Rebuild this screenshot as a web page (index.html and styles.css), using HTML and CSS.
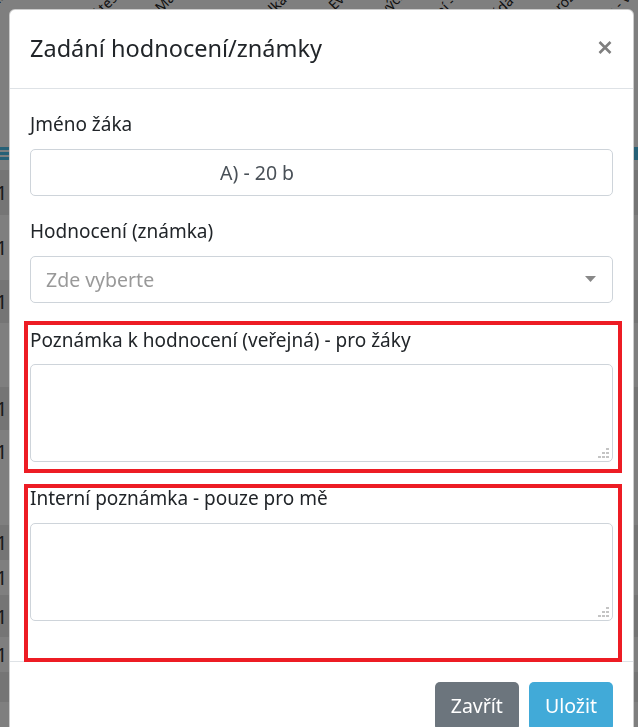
FILE: index.html
```html
<!DOCTYPE html>
<html lang="cs">
<head>
    <meta charset="UTF-8">
    <meta name="viewport" content="width=device-width, initial-scale=1.0">
    <title>Zadání hodnocení</title>
    <link rel="stylesheet" href="styles.css">
</head>
<body>
    <!-- Page behind the dialog -->
    <div class="page">
        <div class="heads">
            <div class="head"><span>Vyjmenovaná slova po N</span></div>
            <div class="head short"><span>Diktát</span></div>
            <div class="head"><span>Čtvrtletní test o zvířatech</span></div>
            <div class="head"><span>Počítání - Malá násobilka</span></div>
            <div class="head short"><span>Sloh</span></div>
            <div class="head"><span>Psaní - Velká písmena</span></div>
            <div class="head"><span>Zeměpis - Evropa</span></div>
            <div class="head"><span>Hudební výchova - písně</span></div>
            <div class="head"><span>Opakování - Sčítání</span></div>
            <div class="head"><span>Přírodověda - tělo a zdraví</span></div>
            <div class="head"><span>Čtení s porozuměním</span></div>
            <div class="head"><span>Angličtina - verbs</span></div>
        </div>
        <div class="toolbar">
            <svg class="menu-icon" width="16" height="14" viewBox="0 0 16 14">
                <rect x="0" y="0" width="16" height="3"/>
                <rect x="0" y="5" width="16" height="3"/>
                <rect x="0" y="10" width="16" height="3"/>
            </svg>
            <span class="toolbar-mark"></span>
        </div>
        <div class="rows">
            <div class="row dark"><span>1</span></div>
            <div class="row"><span>1</span></div>
            <div class="row dark"><span>1</span></div>
            <div class="row"></div>
            <div class="row dark"><span>1</span></div>
            <div class="row"><span>1</span></div>
            <div class="row"></div>
            <div class="row dark"><span>1</span></div>
            <div class="row"><span>1</span></div>
            <div class="row dark"><span>1</span></div>
            <div class="row"><span>1</span></div>
            <div class="row dark"></div>
            <div class="row"></div>
        </div>
    </div>

    <div class="backdrop"></div>

    <div class="modal">
        <div class="modal-header">
            <h5 class="modal-title">Zadání hodnocení/známky</h5>
            <button type="button" class="close" aria-label="Zavřít">
                <svg width="14" height="13" viewBox="0 0 14 13">
                    <path d="M1.5 1 L12.5 12 M12.5 1 L1.5 12"/>
                </svg>
            </button>
        </div>
        <div class="modal-body">
            <div class="form-group">
                <label>Jméno žáka</label>
                <div class="form-control readonly">A) - 20 b</div>
            </div>
            <div class="form-group">
                <label>Hodnocení (známka)</label>
                <div class="form-control select">
                    <span class="placeholder">Zde vyberte</span>
                    <svg class="caret" width="11" height="6" viewBox="0 0 11 6"><polygon points="0,0 11,0 5.5,6"/></svg>
                </div>
            </div>
            <div class="mark mark-first">
                <label>Poznámka k hodnocení (veřejná) - pro žáky</label>
                <div class="note">
                    <textarea></textarea>
                    <svg class="grip" width="11" height="10" viewBox="0 0 11 10">
                        <rect x="8" y="0" width="3" height="2"/>
                        <rect x="4" y="4" width="3" height="2"/>
                        <rect x="8" y="4" width="3" height="2"/>
                        <rect x="0" y="8" width="3" height="2"/>
                        <rect x="4" y="8" width="3" height="2"/>
                        <rect x="8" y="8" width="3" height="2"/>
                    </svg>
                </div>
            </div>
            <div class="mark mark-last">
                <label>Interní poznámka - pouze pro mě</label>
                <div class="note">
                    <textarea></textarea>
                    <svg class="grip" width="11" height="10" viewBox="0 0 11 10">
                        <rect x="8" y="0" width="3" height="2"/>
                        <rect x="4" y="4" width="3" height="2"/>
                        <rect x="8" y="4" width="3" height="2"/>
                        <rect x="0" y="8" width="3" height="2"/>
                        <rect x="4" y="8" width="3" height="2"/>
                        <rect x="8" y="8" width="3" height="2"/>
                    </svg>
                </div>
            </div>
        </div>
        <div class="modal-footer">
            <button type="button" class="btn btn-secondary">Zavřít</button>
            <button type="button" class="btn btn-info">Uložit</button>
        </div>
    </div>
</body>
</html>
```

FILE: styles.css
```css
/* Reset */
* {
    margin: 0;
    padding: 0;
    box-sizing: border-box;
}

html, body {
    height: 100%;
    overflow: hidden;
}

body {
    font-family: 'Noto Sans', 'Open Sans', sans-serif;
    color: #212529;
    background: #fff;
}

/* Page behind the dialog */
.page {
    width: 638px;
}

.heads {
    display: flex;
    height: 140px;
    margin-left: -54px;
}

.head {
    flex: 0 0 57px;
    min-width: 0;
    height: 60px;
    display: flex;
    align-items: flex-end;
}

.head.short {
    height: 100px;
    padding-left: 24px;
}

.head span {
    display: block;
    white-space: nowrap;
    font-size: 14px;
    line-height: 1;
    color: #222;
    transform: rotate(-45deg);
    transform-origin: left bottom;
}

.toolbar {
    height: 30px;
    display: flex;
    justify-content: space-between;
    align-items: flex-start;
    padding-top: 7px;
}

.menu-icon {
    fill: #4cc3ee;
    margin-left: -6px;
}

.toolbar-mark {
    width: 4px;
    height: 13px;
    background: #4cc3ee;
}

.rows {
    display: grid;
    grid-template-rows: 45px 65px 43px 64px 43px 43px 52px 35px 35px 42px 35px 30px 25px;
}

.row {
    display: flex;
    align-items: center;
    background: #fff;
    font-size: 20px;
    color: #333;
}

.row.dark {
    background: #ebebeb;
}

.row span {
    margin-left: -4px;
}

/* Dialog */
.backdrop {
    position: fixed;
    top: 0;
    left: 0;
    right: 0;
    bottom: 0;
    background: rgba(0, 0, 0, 0.5);
}

.modal {
    position: fixed;
    top: 9px;
    left: 9px;
    width: 625px;
    background: #fff;
    border: 1px solid rgba(0, 0, 0, 0.2);
    border-radius: 6px;
}

.modal-header {
    display: flex;
    justify-content: space-between;
    align-items: flex-start;
    padding: 20px;
    border-bottom: 1px solid #dee2e6;
}

.modal-title {
    font-size: 23.5px;
    font-weight: 400;
    line-height: 37.5px;
}

.close {
    background: none;
    border: none;
    margin: 11px 1px 0 0;
    width: 14px;
    height: 13px;
}

.close svg {
    display: block;
    stroke: #7f7f7f;
    stroke-width: 2.6;
    fill: none;
}

.modal-body {
    padding: 20px 20px 20px;
}

label {
    display: block;
    font-size: 19px;
    line-height: 30px;
}

.form-group {
    margin-bottom: 20px;
}

.form-group label {
    margin-bottom: 10px;
}

.form-control {
    height: 47px;
    border: 1px solid #ced4da;
    border-radius: 5px;
    font-size: 19.5px;
    line-height: 45px;
    color: #495057;
}

.readonly {
    padding-left: 189px;
}

.select {
    display: flex;
    justify-content: space-between;
    align-items: center;
    padding: 0 15px;
}

.placeholder {
    color: #999;
}

.caret {
    fill: #888;
    margin-top: -1px;
    margin-right: 1px;
}

/* Red highlight frames */
.mark {
    position: relative;
    z-index: 1;
    border: 4px solid #ed1c24;
    margin: 0 -9px 0 -6px;
    padding: 0 5px 7px 2px;
}

.mark-first {
    margin-top: -2px;
    margin-bottom: 11px;
}

.mark-first label {
    margin-bottom: 9px;
}

.mark-last {
    padding-bottom: 37px;
    margin-bottom: -21px;
}

.mark-last label {
    margin-top: -5px;
    margin-bottom: 10px;
}

.note {
    position: relative;
}

textarea {
    display: block;
    width: 100%;
    height: 98px;
    border: 1px solid #ced4da;
    border-radius: 5px;
    resize: none;
    font-family: inherit;
    font-size: 19px;
}

.grip {
    position: absolute;
    right: 4px;
    bottom: 4px;
    fill: #c4c4c4;
}

/* Footer */
.modal-footer {
    display: flex;
    justify-content: flex-end;
    gap: 10px;
    padding: 20px 20px;
    border-top: 1px solid #dee2e6;
}

.btn {
    font-family: inherit;
    font-size: 19.5px;
    line-height: 30px;
    height: 49px;
    padding: 0 16px;
    color: #fff;
    border: none;
    border-radius: 5px;
}

.btn-secondary {
    background: #6c757d;
}

.btn-info {
    background: #41aad8;
}
```
